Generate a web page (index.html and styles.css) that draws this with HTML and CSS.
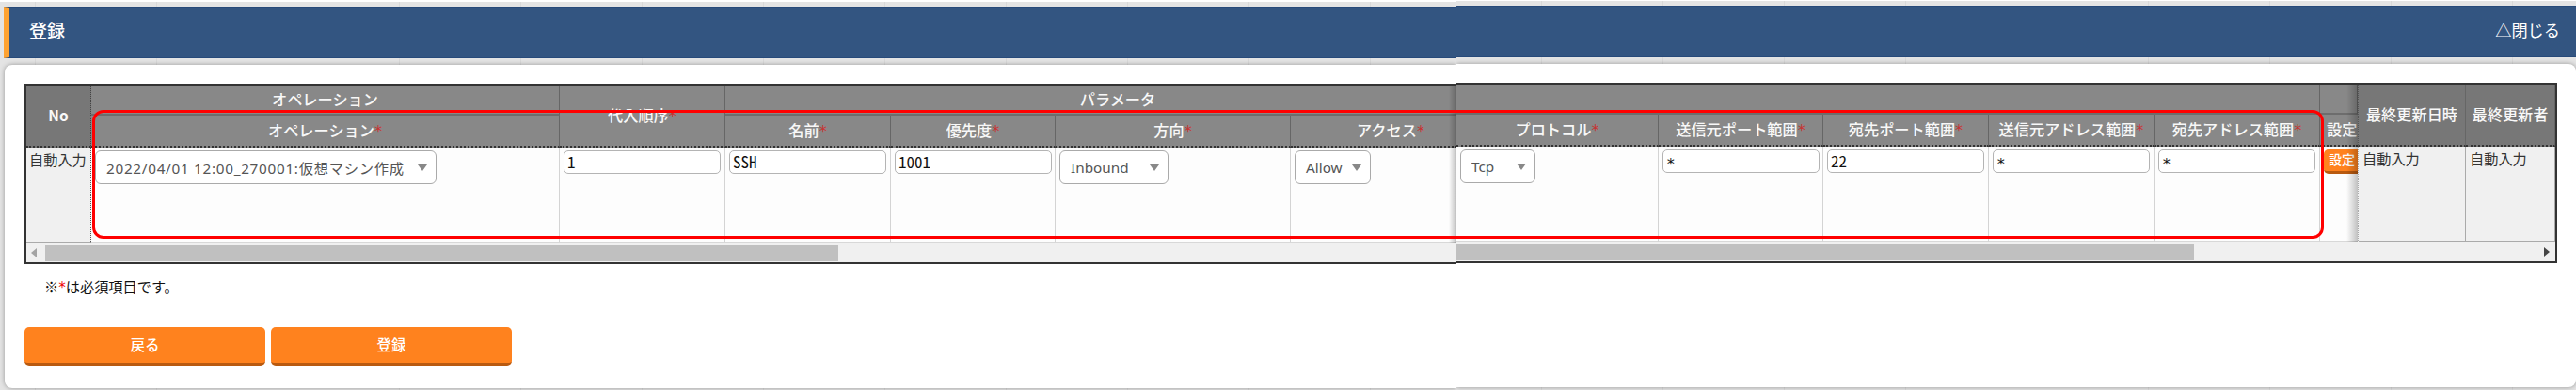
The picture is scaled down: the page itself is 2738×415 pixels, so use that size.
FILE: index.html
```
<!DOCTYPE html>
<html lang="ja">
<head>
    <meta charset="UTF-8">
    <title>登録</title>
    <link rel="stylesheet" href="styles.css">
</head>
<body>
    <div class="screen">
        <div class="pane pane-left">
            <div class="titlebar"><h2>登録</h2></div>
            <div class="panel">
                <div class="table-box">
                    <div class="grid">
                        <div class="th fixed tall">No</div>
                        <div class="th group">オペレーション</div>
                        <div class="th tall"><span>代入順序<i>*</i></span></div>
                        <div class="th group params">パラメータ</div>
                        <div class="th sub"><span>オペレーション<i>*</i></span></div>
                        <div class="th sub"><span>名前<i>*</i></span></div>
                        <div class="th sub"><span>優先度<i>*</i></span></div>
                        <div class="th sub"><span>方向<i>*</i></span></div>
                        <div class="th sub access"><span>アクセス<i>*</i></span></div>
                        <div class="td fixed">自動入力</div>
                        <div class="td"><div class="select operation">2022/04/01 12:00_270001:仮想マシン作成</div></div>
                        <div class="td"><input type="text" value="1"></div>
                        <div class="td"><input type="text" value="SSH"></div>
                        <div class="td"><input type="text" value="1001"></div>
                        <div class="td"><div class="select direction">Inbound</div></div>
                        <div class="td"><div class="select allow">Allow</div></div>
                    </div>
                    <div class="edge-shadow"></div>
                    <div class="scrollbar"><span class="arrow-left"></span><span class="thumb"></span></div>
                </div>
                <p class="note">※<em>*</em>は必須項目です。</p>
                <div class="buttons">
                    <button>戻る</button>
                    <button>登録</button>
                </div>
            </div>
        </div>

        <div class="pane pane-right">
            <div class="titlebar"><span class="close">△閉じる</span></div>
            <div class="panel">
                <div class="table-box">
                    <div class="grid">
                        <div class="th group wide"></div>
                        <div class="th group"></div>
                        <div class="th fixed tall dotted">最終更新日時</div>
                        <div class="th fixed tall">最終更新者</div>
                        <div class="th sub"><span>プロトコル<i>*</i></span></div>
                        <div class="th sub"><span>送信元ポート範囲<i>*</i></span></div>
                        <div class="th sub"><span>宛先ポート範囲<i>*</i></span></div>
                        <div class="th sub"><span>送信元アドレス範囲<i>*</i></span></div>
                        <div class="th sub"><span>宛先アドレス範囲<i>*</i></span></div>
                        <div class="th sub setting">設定</div>
                        <div class="td"><div class="select protocol">Tcp</div></div>
                        <div class="td"><input type="text" class="any" value="*"></div>
                        <div class="td"><input type="text" value="22"></div>
                        <div class="td"><input type="text" class="any" value="*"></div>
                        <div class="td"><input type="text" class="any" value="*"></div>
                        <div class="td setting"><button class="small">設定</button></div>
                        <div class="td fixed dotted">自動入力</div>
                        <div class="td fixed">自動入力</div>
                    </div>
                    <div class="edge-shadow"></div>
                    <div class="scrollbar"><span class="thumb"></span><span class="arrow-right"></span></div>
                </div>
            </div>
        </div>
        <div class="highlight"></div>
    </div>
</body>
</html>
```
FILE: styles.css
```
* {
    box-sizing: border-box;
}
body {
    margin: 0;
    background: #fff;
    color: #333;
    font-family: "Noto Sans CJK JP", sans-serif;
    font-size: 15.2px;
}
.screen {
    position: relative;
    display: flex;
    height: 415px;
    overflow: hidden;
}
.pane {
    height: 416px;
    border-top: 2px solid #fff;
    background-color: #e4e4e4;
}
.pane-left {
    width: 1548px;
    padding: 5px 0 0 4px;
    background-image:
        repeating-linear-gradient(to right, transparent 0 37px, #d9d9d9 37px 38px, transparent 38px 129px);
}
.pane-right {
    flex: 1;
    margin-top: -1px;
    padding-top: 5px;
    background-image:
        repeating-linear-gradient(to right, transparent 0 90px, #d9d9d9 90px 91px, transparent 91px 129px);
}

/* title bar */
.titlebar {
    display: flex;
    height: 55px;
    background: #335581;
    border-top: 1px solid #274a7a;
    border-bottom: 1px solid #274a7a;
    color: #fff;
}
.pane-left .titlebar {
    border-left: 6px solid #ffa332;
}
.titlebar h2 {
    margin: 9px 0 0 21px;
    font-size: 19px;
    font-weight: 500;
    line-height: 29px;
}
.close {
    margin: 12px 17px 0 auto;
    font-size: 17.2px;
    line-height: 26px;
}

/* white panel */
.panel {
    height: 344px;
    margin-top: 7px;
    padding-top: 20px;
    background: #fff;
    box-shadow: 0 0 5px rgba(0,0,0,0.35);
}
.pane-left .panel {
    margin-left: 1px;
    padding-left: 21px;
    border-radius: 8px 0 0 8px;
    clip-path: inset(-7px 0 -7px -7px);
}
.pane-right .panel {
    padding-right: 20px;
    border-radius: 0 8px 8px 0;
    clip-path: inset(-7px -7px -7px 0);
}
.table-box {
    position: relative;
    height: 192px;
    border-top: 2px solid #333;
    border-bottom: 2px solid #333;
    overflow: hidden;
}
.pane-left .table-box {
    border-left: 2px solid #333;
}
.pane-right .table-box {
    border-right: 2px solid #333;
}
.grid {
    display: grid;
    grid-template-rows: 32px 34px 102px;
}
.pane-left .grid {
    grid-template-columns: 69px 498px 176px 176px 175px 250px 176px;
}
.pane-right .grid {
    grid-template-columns: 215px 175px 176px 176px 176px 40px 115px 95px;
}
.th {
    display: flex;
    align-items: center;
    justify-content: center;
    padding-bottom: 3px;
    background: #888;
    border-right: 1px solid #666;
    color: #f8f8f8;
    font-size: 16.2px;
    font-weight: 500;
    line-height: 24px;
    white-space: nowrap;
}
.th i,
.note em {
    color: #c83232;
    font-family: "DejaVu Sans", sans-serif;
    font-style: normal;
    font-weight: normal;
    line-height: 1;
}
.th.group {
    border-bottom: 2px solid #6d6d6d;
}
.th.tall {
    grid-row: span 2;
}
.th.sub,
.th.tall {
    border-bottom: 2px dotted #333;
}
.th.params {
    grid-column: span 4;
    padding-left: 57px;
    border-right: 0;
}
.th.wide {
    grid-column: span 5;
}
.th.access {
    padding-left: 36px;
    border-right: 0;
}
.th.fixed {
    background: #777;
}
.pane-left .th.fixed {
    border-right: 1px dotted #444;
    font-size: 15.5px;
    font-weight: bold;
}
.th.dotted,
.td.dotted {
    border-left: 1px dotted #555;
}
.td {
    padding: 3px 4px;
    background: #fdfdfd;
    border-right: 1px solid #d4d4d4;
    border-bottom: 2px solid #d8d8d8;
    white-space: nowrap;
}
.td.fixed {
    padding: 1px 4px;
    background: #f0f0f0;
    border-color: #aaa;
    line-height: 23px;
}
.pane-left .td.fixed {
    padding-left: 3px;
    border-right: 1px dotted #555;
}
.pane-left .td:last-child {
    border-right: 0;
}
.th.setting,
.td.setting {
    justify-content: flex-start;
    border-right: 0;
    overflow: hidden;
}
.th.setting {
    padding-left: 7px;
}

/* form controls */
input {
    display: block;
    width: 167px;
    height: 25px;
    padding: 0 4px 2px 3px;
    border: 1px solid #b4b4b4;
    border-radius: 5px;
    background: #fff;
    color: #111;
    font-family: "Noto Sans CJK JP", sans-serif;
    font-size: 17px;
    font-feature-settings: "hwid";
}
.any {
    padding: 6px 3px 0;
    font-family: "DejaVu Sans Mono", monospace;
    font-size: 16px;
}
.select {
    display: flex;
    align-items: center;
    justify-content: space-between;
    height: 36px;
    padding: 0 9px 0 11px;
    border: 1px solid #aaa;
    border-radius: 6px;
    background: #fff;
    color: #555;
    font-family: "Noto Sans", "Noto Sans CJK JP", sans-serif;
    font-size: 15.3px;
}
.select::after {
    content: "";
    border: 5px solid transparent;
    border-top: 7px solid #888;
    border-bottom: 0;
}
.operation {
    width: 363px;
    letter-spacing: 0.7px;
}
.direction {
    width: 116px;
}
.allow {
    width: 81px;
}
.protocol {
    width: 80px;
}

/* shadow beside the fixed columns */
.edge-shadow {
    position: absolute;
    top: 0;
    right: 0;
    width: 8px;
    height: 168px;
    background: linear-gradient(to right, transparent, rgba(0,0,0,0.24));
}
.pane-right .edge-shadow {
    right: 210px;
    width: 12px;
}
.scrollbar {
    display: flex;
    align-items: center;
    height: 20px;
    background: #f0f0f0;
}
.thumb {
    width: 843px;
    height: 17px;
    background: #c0c0c0;
}
.pane-right .thumb {
    width: 784px;
}
.arrow-left {
    margin: 0 9px 0 5px;
    border: 5px solid transparent;
    border-right: 6px solid #a3a3a3;
    border-left: 0;
}
.arrow-right {
    margin: 0 6px 0 auto;
    border: 5px solid transparent;
    border-left: 6px solid #444;
    border-right: 0;
}

/* footer */
.note {
    margin: 11px 0 0 21px;
    color: #111;
    line-height: 24px;
}
.note em {
    color: #e00;
}
.buttons {
    display: flex;
    gap: 6px;
    margin-top: 32px;
}
button {
    width: 256px;
    height: 41px;
    padding: 0 0 2px;
    border: 0;
    border-bottom: 3px solid #b95a10;
    border-radius: 5px;
    background: #ff821e;
    color: #fff;
    font-family: "Noto Sans CJK JP", sans-serif;
    font-size: 15.5px;
    font-weight: 500;
}
.small {
    display: block;
    width: 54px;
    height: 26px;
    padding: 0 0 3px 5px;
    font-size: 14px;
    line-height: 20px;
    text-align: left;
}

/* frame round the input columns */
.highlight {
    position: absolute;
    left: 98px;
    top: 117px;
    width: 2372px;
    height: 137px;
    border: 3px solid #f00;
    border-radius: 12px;
}
```
